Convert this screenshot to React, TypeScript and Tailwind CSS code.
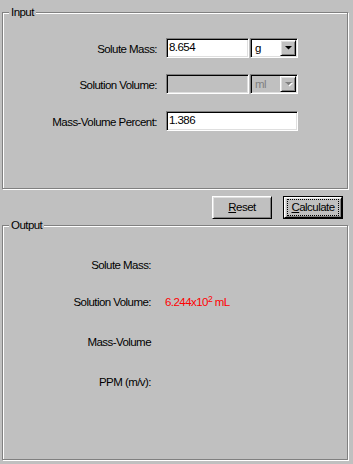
import React from "react";

const sunken =
  "border border-t-[#808080] border-l-[#808080] border-r-white border-b-white shadow-[inset_1px_1px_0_#000,inset_-1px_-1px_0_#dfdfdf]";
const raised =
  "border border-t-white border-l-white border-r-black border-b-black shadow-[inset_1px_1px_0_#dfdfdf,inset_-1px_-1px_0_#808080]";

function Arrow({ disabled }: { disabled?: boolean }) {
  return (
    <svg width="9" height="6" viewBox="0 0 9 6">
      {disabled && <polygon points="2,2 9,2 5.5,5.5" fill="#fff" />}
      <polygon points="1,1 8,1 4.5,4.5" fill={disabled ? "#808080" : "#000"} />
    </svg>
  );
}

function Select({ value, disabled }: { value: string; disabled?: boolean }) {
  return (
    <div className={`${sunken} w-[48px] h-[20px] ml-[1px] flex p-[1px] ${disabled ? "bg-[#c0c0c0]" : "bg-white"}`}>
      <div className={`flex-1 pl-[3px] leading-[16px] ${disabled ? "text-[#808080]" : "text-black"}`}>{value}</div>
      <div className={`${raised} w-[16px] h-[16px] bg-[#c0c0c0] flex items-center justify-center`}>
        <Arrow disabled={disabled} />
      </div>
    </div>
  );
}

function GroupBox({ label, height, children }: { label: string; height: number; children?: React.ReactNode }) {
  return (
    <div
      className="relative ml-[2px] w-[346px] border border-[#808080] shadow-[1px_1px_0_#fff,inset_1px_1px_0_#fff]"
      style={{ height }}
    >
      <div className="absolute left-[6px] top-[-8px] px-[2px] bg-[#c0c0c0] leading-[15px]">{label}</div>
      {children}
    </div>
  );
}

export default function App() {
  return (
    <div className="w-[353px] h-[464px] bg-[#c0c0c0] font-['Liberation_Sans',Arial,sans-serif] text-[11.5px] tracking-[-0.55px] leading-[15px] text-black overflow-hidden">
      <div className="pt-[12px]">
        <GroupBox label="Input" height={177}>
          <div className="flex flex-col pt-[25px]">
            <div className="flex h-[20px]">
              <div className="w-[154px] text-right mt-[4px]">Solute Mass:</div>
              <div className={`${sunken} ml-[9px] w-[83px] h-[20px] bg-white pl-[2px] leading-[16px]`}>8.654</div>
              <Select value="g" />
            </div>
            <div className="flex h-[20px] mt-[16px]">
              <div className="w-[154px] text-right mt-[4px]">Solution Volume:</div>
              <div className={`${sunken} ml-[9px] w-[83px] h-[20px] bg-[#c0c0c0]`}></div>
              <Select value="ml" disabled />
            </div>
            <div className="flex h-[20px] mt-[17px]">
              <div className="w-[154px] text-right mt-[4px]">Mass-Volume Percent:</div>
              <div className={`${sunken} ml-[9px] w-[132px] h-[20px] bg-white pl-[2px] leading-[16px]`}>1.386</div>
            </div>
          </div>
        </GroupBox>
      </div>
      <div className="flex mt-[7px] ml-[212px] gap-[11px]">
        <div className={`${raised} w-[60px] h-[23px] flex items-center justify-center bg-[#c0c0c0]`}>
          <span>
            <span className="underline">R</span>eset
          </span>
        </div>
        <div className="w-[60px] h-[23px] border border-black flex">
          <div className={`${raised} flex-1 flex py-[1px] px-[2px]`}>
            <div className="flex-1 border border-dotted border-black flex items-center justify-center">
              <span>
                <span className="underline">C</span>alculate
              </span>
            </div>
          </div>
        </div>
      </div>
      <div className="mt-[6px]">
        <GroupBox label="Output" height={235}>
          <div className="flex flex-col pt-[32px]">
            <div className="flex">
              <div className="w-[148px] text-right">Solute Mass:</div>
            </div>
            <div className="flex mt-[22px]">
              <div className="w-[148px] text-right">Solution Volume:</div>
              <div className="ml-[14px] text-[#ff0000]">
                6.244x10<sup>2</sup> mL
              </div>
            </div>
            <div className="flex mt-[25px]">
              <div className="w-[148px] text-right">Mass-Volume</div>
            </div>
            <div className="flex mt-[25px]">
              <div className="w-[148px] text-right">PPM (m/v):</div>
            </div>
          </div>
        </GroupBox>
      </div>
    </div>
  );
}
